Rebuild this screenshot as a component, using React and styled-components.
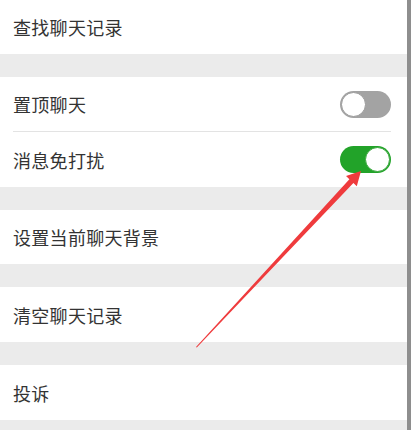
import React from 'react';
import styled, { createGlobalStyle } from 'styled-components';

const GlobalStyle = createGlobalStyle`
  html, body {
    margin: 0;
    padding: 0;
    background: #ebebeb;
  }
  body {
    font-family: "Noto Sans CJK SC", "Noto Sans", sans-serif;
  }
`;

const Screen = styled.div`
  position: relative;
  width: 411px;
  height: 430px;
  display: flex;
  overflow: hidden;
  background: #ebebeb;
`;

const Content = styled.div`
  flex: 1;
  display: flex;
  flex-direction: column;
`;

const ScrollEdge = styled.div`
  width: 4px;
  background: #8e8e8e;
`;

const Group = styled.div`
  display: flex;
  flex-direction: column;
  background: #ffffff;
  margin-bottom: 23px;
`;

const Row = styled.div`
  height: ${(p) => p.h || 55}px;
  display: flex;
  align-items: center;
  justify-content: space-between;
  padding: 0 16px 0 13px;
  box-sizing: border-box;
`;

const Label = styled.span`
  font-size: 18px;
  color: #333333;
  letter-spacing: 0.3px;
`;

const Divider = styled.div`
  height: 1px;
  margin: 0 16px 0 13px;
  background: #e3e3e3;
`;

const Toggle = styled.div`
  width: 51px;
  height: 27px;
  border-radius: 14px;
  box-sizing: border-box;
  background: ${(p) => (p.on ? '#22a329' : '#a3a3a3')};
  display: flex;
  align-items: center;
  justify-content: ${(p) => (p.on ? 'flex-end' : 'flex-start')};
  padding: 1px;
`;

const Knob = styled.div`
  width: 25px;
  height: 25px;
  border-radius: 50%;
  background: #ffffff;
  box-sizing: border-box;
  border: 1px solid ${(p) => (p.on ? '#3aa83e' : '#9a9a9a')};
`;

const ArrowLayer = styled.svg`
  position: absolute;
  left: 0;
  top: 0;
  pointer-events: none;
`;

function Switch({ on }) {
  return (
    <Toggle on={on ? 1 : 0}>
      <Knob on={on ? 1 : 0} />
    </Toggle>
  );
}

export default function App() {
  return (
    <>
      <GlobalStyle />
      <Screen>
        <Content>
          <Group>
            <Row h={54}>
              <Label>查找聊天记录</Label>
            </Row>
          </Group>
          <Group>
            <Row h={54}>
              <Label>置顶聊天</Label>
              <Switch />
            </Row>
            <Divider />
            <Row h={55}>
              <Label>消息免打扰</Label>
              <Switch on />
            </Row>
          </Group>
          <Group>
            <Row h={54}>
              <Label>设置当前聊天背景</Label>
            </Row>
          </Group>
          <Group>
            <Row h={55}>
              <Label>清空聊天记录</Label>
            </Row>
          </Group>
          <Group>
            <Row h={55}>
              <Label>投诉</Label>
            </Row>
          </Group>
        </Content>
        <ScrollEdge />
        <ArrowLayer width="411" height="430" viewBox="0 0 411 430">
          <polygon
            points="196,347 349.4,179.2 346,176 361,171 356.8,186.2 353.4,183 196.8,347.6"
            fill="#ef3b3d"
          />
        </ArrowLayer>
      </Screen>
    </>
  );
}
